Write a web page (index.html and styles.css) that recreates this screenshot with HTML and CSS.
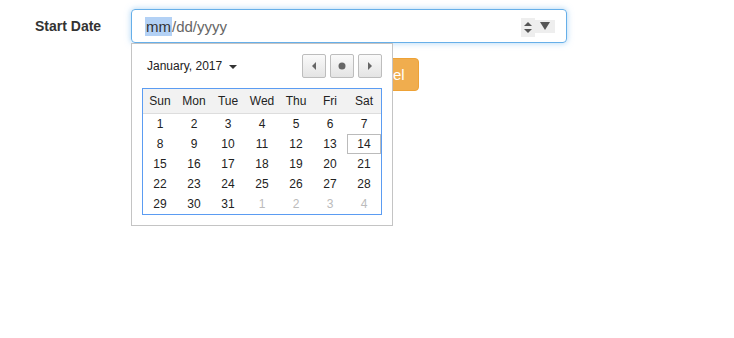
FILE: index.html
```html
<!DOCTYPE html>
<html lang="en">
<head>
  <meta charset="UTF-8" />
  <title>Start Date</title>
  <link rel="stylesheet" href="styles.css">
</head>
<body>
  <div class="form">
    <div class="row">
      <span class="label">Start Date</span>
      <div class="field">
        <div class="date-input">
          <span class="seg selected">mm</span><span class="seg">/dd/yyyy</span>
          <span class="spin">
            <svg width="8" height="13" viewBox="0 0 8 13"><path d="M4 1 L8 5 H0 Z M0 8 H8 L4 12 Z" fill="#555"/></svg>
          </span>
          <span class="drop">
            <svg width="10" height="8" viewBox="0 0 10 8"><path d="M0 0 H10 L5 8 Z" fill="#555"/></svg>
          </span>
        </div>

        <!-- calendar popup -->
        <div class="picker">
          <div class="picker-head">
            <span class="month">January, 2017 <i class="caret"></i></span>
            <div class="nav">
              <span class="nav-btn"><svg width="6" height="8" viewBox="0 0 6 8"><path d="M5 0 V8 L1 4 Z" fill="#666"/></svg></span>
              <span class="nav-btn"><svg width="8" height="8" viewBox="0 0 8 8"><circle cx="4" cy="4" r="3.5" fill="#666"/></svg></span>
              <span class="nav-btn"><svg width="6" height="8" viewBox="0 0 6 8"><path d="M1 0 V8 L5 4 Z" fill="#666"/></svg></span>
            </div>
          </div>
          <div class="cal">
            <div class="cal-head">
              <span>Sun</span><span>Mon</span><span>Tue</span><span>Wed</span><span>Thu</span><span>Fri</span><span>Sat</span>
            </div>
            <div class="cal-days">
              <span>1</span><span>2</span><span>3</span><span>4</span><span>5</span><span>6</span><span>7</span>
              <span>8</span><span>9</span><span>10</span><span>11</span><span>12</span><span>13</span><span class="today">14</span>
              <span>15</span><span>16</span><span>17</span><span>18</span><span>19</span><span>20</span><span>21</span>
              <span>22</span><span>23</span><span>24</span><span>25</span><span>26</span><span>27</span><span>28</span>
              <span>29</span><span>30</span><span>31</span><span class="other">1</span><span class="other">2</span><span class="other">3</span><span class="other">4</span>
            </div>
          </div>
        </div>
      </div>
    </div>

    <div class="actions">
      <span class="btn-warning">Cancel</span>
    </div>
  </div>
</body>
</html>
```

FILE: styles.css
```css
html, body {
  min-height: 100vh;
}
body {
  margin: 0;
  font-family: "Liberation Sans", Arial, sans-serif;
  color: #333;
  background: #fff;
}
.form {
  padding: 9px 0 0 35px;
}
.row {
  display: flex;
  align-items: center;
}
.label {
  width: 96px;
  font-size: 14px;
  font-weight: bold;
  color: #333;
}
.field {
  position: relative;
  width: 436px;
}
.date-input {
  display: flex;
  align-items: center;
  height: 34px;
  box-sizing: border-box;
  padding: 0 11px 0 13px;
  border: 1px solid #66afe9;
  border-radius: 4px;
  box-shadow: 0 0 6px rgba(102,175,233,0.55);
  font-size: 15px;
  color: #666;
}
.seg.selected {
  background: #b3d1f5;
  color: #333;
  padding: 0 1px;
  line-height: 19px;
}
.spin {
  margin-left: auto;
  width: 14px;
  height: 19px;
  background: #eee;
  display: flex;
  align-items: center;
  justify-content: center;
  margin-top: 2px;
}
.drop {
  width: 20px;
  height: 13px;
  background: #eee;
  display: flex;
  align-items: center;
  justify-content: center;
}
.picker {
  position: absolute;
  top: 100%;
  left: 0;
  width: 262px;
  box-sizing: border-box;
  padding: 10px 10px 10px 10px;
  border: 1px solid #c4c4c4;
  background: #fff;
  z-index: 2;
}
.picker-head {
  display: flex;
  align-items: center;
  justify-content: space-between;
  height: 24px;
  margin-bottom: 10px;
}
.month {
  font-size: 12px;
  color: #222;
  padding-left: 5px;
}
.caret {
  display: inline-block;
  width: 0;
  height: 0;
  margin-left: 3px;
  vertical-align: middle;
  border-left: 4px solid transparent;
  border-right: 4px solid transparent;
  border-top: 4px solid #333;
}
.nav {
  display: flex;
  gap: 4px;
}
.nav-btn {
  width: 24px;
  height: 24px;
  box-sizing: border-box;
  display: flex;
  align-items: center;
  justify-content: center;
  border: 1px solid #bdbdbd;
  border-radius: 2px;
  background: linear-gradient(#fafafa, #e4e4e4);
}
.cal {
  width: 240px;
  box-sizing: border-box;
  border: 1px solid #5b9cf2;
  font-size: 12px;
  color: #222;
}
.cal-head,
.cal-days {
  display: grid;
  grid-template-columns: repeat(7, 34px);
}
.cal-head {
  height: 24px;
  align-items: center;
  background: #f2f2f2;
  border-bottom: 1px solid #ddd;
}
.cal-head span,
.cal-days span {
  text-align: center;
}
.cal-days {
  grid-auto-rows: 20px;
  align-items: center;
}
.cal-days span {
  line-height: 20px;
  box-sizing: border-box;
}
.cal-days .today {
  border: 1px solid #bbb;
  line-height: 18px;
}
.cal-days .other {
  color: #bbb;
}
.actions {
  margin-top: 15px;
  padding-left: 310px;
}
.btn-warning {
  display: inline-block;
  height: 33px;
  box-sizing: border-box;
  padding: 0 13px 0 12px;
  line-height: 31px;
  font-size: 15px;
  color: #fff;
  background: #f0ad4e;
  border: 1px solid #eea236;
  border-radius: 4px;
}
```
